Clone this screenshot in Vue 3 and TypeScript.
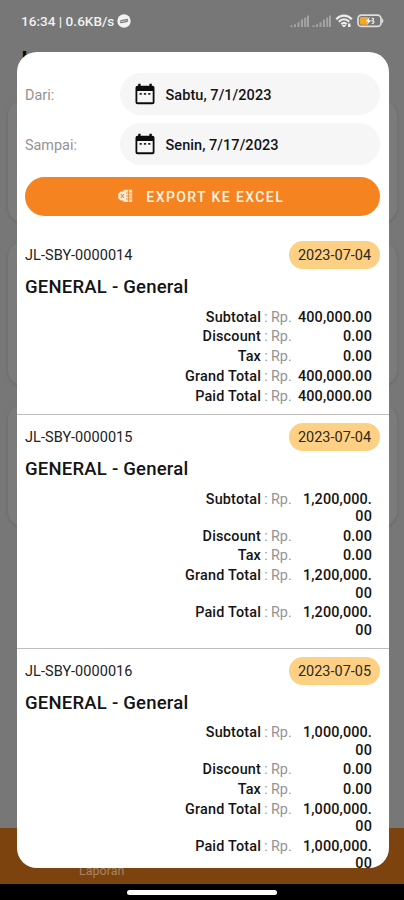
<script setup lang="ts">
interface DateField {
  label: string
  value: string
}

interface Row {
  label: string
  amount: string[]
}

interface Sale {
  code: string
  date: string
  customer: string
  rows: Row[]
}

const fields: DateField[] = [
  { label: 'Dari:', value: 'Sabtu, 7/1/2023' },
  { label: 'Sampai:', value: 'Senin, 7/17/2023' },
]

function rowsFor(total: string[]): Row[] {
  return [
    { label: 'Subtotal', amount: total },
    { label: 'Discount', amount: ['0.00'] },
    { label: 'Tax', amount: ['0.00'] },
    { label: 'Grand Total', amount: total },
    { label: 'Paid Total', amount: total },
  ]
}

const sales: Sale[] = [
  { code: 'JL-SBY-0000014', date: '2023-07-04', customer: 'GENERAL - General', rows: rowsFor(['400,000.00']) },
  { code: 'JL-SBY-0000015', date: '2023-07-04', customer: 'GENERAL - General', rows: rowsFor(['1,200,000.', '00']) },
  { code: 'JL-SBY-0000016', date: '2023-07-05', customer: 'GENERAL - General', rows: rowsFor(['1,000,000.', '00']) },
]
</script>

<template>
  <div class="screen">
    <header class="status">
      <span class="clock">16:34 | 0.6KB/s</span>
      <svg class="badge-icon" viewBox="0 0 14 14">
        <circle cx="7" cy="7" r="6.7" fill="#f2f2f2" />
        <path d="M3 7.600C5 5.300 6.500 7 10.800 5.400M3.300 8.800C6.500 7.200 8.500 9.200 11 6.500" fill="none" stroke="#777" stroke-width="1.2" />
      </svg>
      <span class="spacer"></span>
      <svg v-for="n in 2" :key="n" class="signal" viewBox="0 0 19 12">
        <path d="M1.5 12v-1.8M5 12V9.3M8.5 12V7.2M12 12V4.6M15.2 12V2.4M18 12V.5" stroke="#a4a4a4" stroke-width="2" />
      </svg>
      <svg class="wifi" viewBox="0 0 18 14">
        <path d="M1.2 5.2C5.8.4 12.2.4 16.8 5.2M3.8 7.8c3.2-3.2 7.2-3.2 10.400 0M6.300 10.100c1.700-1.600 3.700-1.600 5.400 0" fill="none" stroke="#ededed" stroke-width="2.200" />
        <path d="M6.500 11h5L9 13.600zM13 9.500h2.500V13H13z" fill="#ededed" />
      </svg>
      <svg class="battery" viewBox="0 0 27 14">
        <rect x="1" y="1.2" width="23" height="11.2" rx="3.5" fill="#777" stroke="#dedede" stroke-width="1.7" />
        <path d="M4.5 3h6.500v7.700H4.500A1.800 1.800 0 0 1 2.800 9V4.700A1.800 1.800 0 0 1 4.500 3z" fill="#f3a52c" />
        <path d="M12.700 2.800 8.700 7.400h2.400l-.8 3.400 3.800-4.600h-2.300z" fill="#fff" />
        <path d="M14.700 4.400c2-.8 2.700 1.700.7 2.400 2.600.5 1.500 3.300-.7 2.400" fill="none" stroke="#eee" stroke-width="1.200" />
        <path d="M25.200 4.800q1.600 1.900 0 3.900z" fill="#dedede" stroke="#dedede" />
      </svg>
    </header>

    <main class="backdrop">
      <h1 class="page-title">Laporan</h1>
      <div class="card card-first"></div>
      <div class="card"></div>
      <div class="card card-last"></div>
    </main>

    <nav class="tabs"><span>Laporan</span></nav>
    <footer class="gesture"><i></i></footer>

    <section class="modal">
      <div class="filters">
        <div v-for="f in fields" :key="f.label" class="field">
          <label>{{ f.label }}</label>
          <div class="picker">
            <svg viewBox="0 0 20 22">
              <path fill-rule="evenodd" d="M3.2.8h2.400v2h8.800v-2h2.400v2h.7a2 2 0 0 1 2 2v14.400a2 2 0 0 1-2 2h-15a2 2 0 0 1-2-2V4.800a2 2 0 0 1 2-2h.7zM2.300 8v11.200h15.400V8z" fill="#0c0c0c" />
              <path d="M4.600 10h2.200v1.800H4.600zM8.900 10h2.200v1.800H8.900zM13.200 10h2.200v1.800h-2.200z" fill="#222" />
            </svg>
            <span>{{ f.value }}</span>
          </div>
        </div>
        <button class="export" type="button">
          <svg viewBox="0 0 15 14">
            <path d="M5.500.7h8.700v12.300H5.500z" fill="#ffe3c6" />
            <path d="M10.500 1v12M8 4h6M8 7h6M8 10h6" stroke="#f5841f" stroke-width=".8" />
            <path d="M.3 4.500 3 2.500h5v9H3L.3 9.500z" fill="#fff0df" />
            <path d="m2.700 5 3.400 4M6.100 5 2.700 9" stroke="#f5841f" stroke-width="1.100" />
          </svg>
          <span>EXPORT KE EXCEL</span>
        </button>
      </div>

      <article v-for="s in sales" :key="s.code" class="sale">
        <div class="sale-head">
          <span class="code">{{ s.code }}</span>
          <span class="date">{{ s.date }}</span>
        </div>
        <h2>{{ s.customer }}</h2>
        <div v-for="r in s.rows" :key="r.label" class="row">
          <b>{{ r.label }}</b>
          <span class="colon">:</span>
          <span class="currency">Rp.</span>
          <div class="amount"><div v-for="line in r.amount" :key="line">{{ line }}</div></div>
        </div>
      </article>
    </section>
  </div>
</template>

<style>
body {
  margin: 0;
  background: #777;
}
</style>

<style scoped>
.screen {
  position: relative;
  display: flex;
  flex-direction: column;
  box-sizing: border-box;
  width: 404px;
  height: 900px;
  overflow: hidden;
  background: #777;
  font-family: Roboto, 'Liberation Sans', sans-serif;
  color: #141414;
}
.screen * {
  box-sizing: border-box;
}
.status {
  display: flex;
  align-items: center;
  height: 42px;
  padding: 0 20.5px 0 21px;
  color: #f0f0f0;
}
.clock {
  font-size: 13.6px;
  font-weight: 500;
  white-space: nowrap;
}
.badge-icon {
  width: 14px;
  height: 14px;
  margin-left: 3px;
}
.spacer {
  flex: 1;
}
.signal {
  width: 19px;
  height: 12px;
  margin-right: 3.5px;
}
.wifi {
  width: 18px;
  height: 14px;
  margin-right: 4px;
}
.battery {
  width: 27px;
  height: 14px;
}
.backdrop {
  flex: 1;
  padding: 6px 7.5px 0;
}
.page-title {
  height: 52px;
  margin: 0;
  padding-left: 14px;
  color: #080808;
  font-size: 22px;
  font-weight: 700;
  line-height: 24px;
}
.card {
  height: 145px;
  margin-bottom: 18px;
  border-radius: 16px;
  background: #7b7b7b;
  box-shadow: 0 1px 3px #666;
}
.card-first {
  height: 123px;
}
.card-last {
  height: 123px;
}
.tabs {
  height: 56px;
  padding: 35px 0 0 79px;
  background: #7d430f;
  color: #a78365;
  font-size: 12.5px;
  line-height: 16px;
}
.gesture {
  display: flex;
  justify-content: center;
  height: 16px;
  padding-top: 6px;
  background: #000;
}
.gesture i {
  width: 150px;
  height: 5px;
  border-radius: 3px;
  background: #fff;
}
.modal {
  position: absolute;
  top: 52px;
  left: 16.5px;
  width: 372px;
  height: 816px;
  overflow: hidden;
  border-radius: 20px;
  background: #fff;
}
.filters {
  display: flex;
  flex-direction: column;
  height: 181px;
  padding: 21px 8.5px 0;
}
.field {
  display: flex;
  align-items: center;
  height: 42px;
  margin-bottom: 8px;
}
.field label {
  width: 95px;
  padding-top: 2px;
  color: #939393;
  font-size: 14.4px;
}
.picker {
  display: flex;
  flex: 1;
  align-items: center;
  height: 42px;
  padding-left: 14.5px;
  border-radius: 21px;
  background: #f6f6f6;
  font-size: 14.5px;
  font-weight: 500;
  letter-spacing: 0.05px;
}
.picker span {
  padding-top: 2px;
}
.picker svg {
  width: 20px;
  height: 22px;
  margin-right: 11px;
}
.export {
  display: flex;
  align-items: center;
  justify-content: center;
  height: 39px;
  margin-top: 4px;
  padding: 1px 3px 0 0;
  border: 0;
  border-radius: 20px;
  background: #f5831f;
  color: #fff4e4;
  font: 500 14px Roboto, 'Liberation Sans', sans-serif;
  letter-spacing: 1.4px;
}
.export svg {
  width: 15px;
  height: 14px;
  margin: 0 13.5px 2px 0;
}
.sale {
  padding: 8px 8.5px 6.2px;
  border-bottom: 1px solid #bdbdbd;
}
.sale-head {
  display: flex;
  align-items: center;
  justify-content: space-between;
  height: 28px;
}
.code {
  padding-top: 1px;
  color: #222;
  font-size: 14.5px;
  letter-spacing: 0.08px;
}
.date {
  width: 91px;
  height: 28px;
  border-radius: 14px;
  background: #fdd084;
  color: #302719;
  font-size: 14.5px;
  line-height: 29px;
  text-align: center;
}
h2 {
  height: 39.7px;
  margin: 0;
  padding-top: 6px;
  font-size: 18.5px;
  font-weight: 500;
  line-height: 24px;
  letter-spacing: 0.22px;
}
.row {
  display: flex;
  margin-bottom: 2.5px;
  padding-right: 8px;
  font-size: 14.4px;
  line-height: 17.3px;
}
.row b {
  flex: 1;
  font-weight: 500;
  letter-spacing: 0.18px;
  text-align: right;
}
.colon {
  width: 10px;
  color: #999;
  text-align: center;
}
.currency {
  width: 22px;
  color: #959595;
}
.amount {
  width: 79px;
  font-weight: 500;
  letter-spacing: 0.14px;
  text-align: right;
}
</style>
